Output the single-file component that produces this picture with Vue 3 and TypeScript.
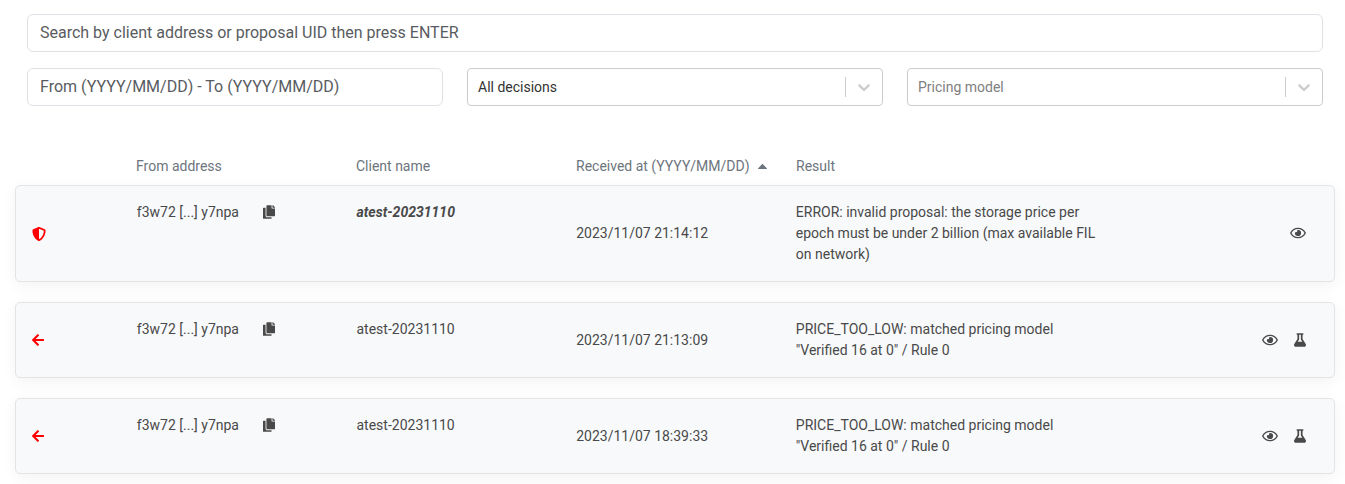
<script setup lang="ts">
import { ref } from 'vue'

interface Proposal {
  id: number
  status: 'error' | 'rejected'
  address: string
  client: string
  emphasised: boolean
  receivedAt: string
  result: string
  testable: boolean
}

const search = ref('')
const period = ref('')
const decision = ref('all')
const model = ref('')

const proposals: Proposal[] = [
  {
    id: 1,
    status: 'error',
    address: 'f3w72 [...] y7npa',
    client: 'atest-20231110',
    emphasised: true,
    receivedAt: '2023/11/07 21:14:12',
    result:
      'ERROR: invalid proposal: the storage price per epoch must be under 2 billion (max available FIL on network)',
    testable: false,
  },
  {
    id: 2,
    status: 'rejected',
    address: 'f3w72 [...] y7npa',
    client: 'atest-20231110',
    emphasised: false,
    receivedAt: '2023/11/07 21:13:09',
    result: 'PRICE_TOO_LOW: matched pricing model "Verified 16 at 0" / Rule 0',
    testable: true,
  },
  {
    id: 3,
    status: 'rejected',
    address: 'f3w72 [...] y7npa',
    client: 'atest-20231110',
    emphasised: false,
    receivedAt: '2023/11/07 18:39:33',
    result: 'PRICE_TOO_LOW: matched pricing model "Verified 16 at 0" / Rule 0',
    testable: true,
  },
]
</script>

<template>
  <main class="page">
    <form class="filters" @submit.prevent>
      <input
        v-model="search"
        class="field search"
        type="text"
        aria-label="Search"
        placeholder="Search by client address or proposal UID then press ENTER"
      />
      <input
        v-model="period"
        class="field"
        type="text"
        aria-label="Period"
        placeholder="From (YYYY/MM/DD) - To (YYYY/MM/DD)"
      />
      <div class="picker">
        <select v-model="decision" aria-label="Decision">
          <option value="all">All decisions</option>
        </select>
        <span class="indicator">
          <svg viewBox="0 0 20 20" aria-hidden="true">
            <path
              d="M4.516 7.548c0.436-0.446 1.043-0.481 1.576 0l3.908 3.747 3.908-3.747c0.533-0.481 1.141-0.446 1.574 0 0.436 0.445 0.408 1.197 0 1.615-0.406 0.418-4.695 4.502-4.695 4.502-0.217 0.223-0.502 0.335-0.787 0.335s-0.57-0.112-0.789-0.335c0 0-4.287-4.084-4.695-4.502s-0.436-1.17 0-1.615z"
            />
          </svg>
        </span>
      </div>
      <div class="picker">
        <select v-model="model" class="empty" aria-label="Pricing model">
          <option value="">Pricing model</option>
        </select>
        <span class="indicator">
          <svg viewBox="0 0 20 20" aria-hidden="true">
            <path
              d="M4.516 7.548c0.436-0.446 1.043-0.481 1.576 0l3.908 3.747 3.908-3.747c0.533-0.481 1.141-0.446 1.574 0 0.436 0.445 0.408 1.197 0 1.615-0.406 0.418-4.695 4.502-4.695 4.502-0.217 0.223-0.502 0.335-0.787 0.335s-0.57-0.112-0.789-0.335c0 0-4.287-4.084-4.695-4.502s-0.436-1.17 0-1.615z"
            />
          </svg>
        </span>
      </div>
    </form>

    <table class="proposals">
      <thead>
        <tr class="line">
          <td></td>
          <th scope="col">From address</th>
          <th scope="col">Client name</th>
          <th scope="col" aria-sort="ascending">
            <button class="sort" type="button">
              Received at (YYYY/MM/DD)
              <svg class="caret" viewBox="0 0 9 5" aria-hidden="true">
                <path d="M0.3 5h8.4c.4 0 .4-.4.1-.7L5.2.4c-.4-.5-1-.5-1.4 0L.2 4.3c-.3.3-.3.7.1.7z" />
              </svg>
            </button>
          </th>
          <th scope="col">Result</th>
          <td></td>
        </tr>
      </thead>
      <tbody>
        <tr v-for="p in proposals" :key="p.id" class="line card">
          <td class="status">
            <svg v-if="p.status === 'error'" class="icon square" viewBox="0 0 512 512" role="img" aria-label="Error">
              <path
                d="M466.5 83.7l-192-80a48.15 48.15 0 0 0-36.9 0l-192 80C27.7 91.1 16 108.6 16 128c0 198.5 114.5 335.7 221.5 380.3 11.8 4.9 25.1 4.9 36.9 0C360.1 472.6 496 349.3 496 128c0-19.4-11.7-36.9-29.5-44.3zM256.1 446.3l-.1-381 175.9 73.3c-3.3 151.4-82.1 261.1-175.8 307.7z"
              />
            </svg>
            <svg v-else class="icon" viewBox="0 0 448 512" role="img" aria-label="Rejected">
              <path
                d="M257.5 445.1l-22.2 22.2c-9.4 9.4-24.6 9.4-33.9 0L7 273c-9.4-9.4-9.4-24.6 0-33.9L201.4 44.7c9.4-9.4 24.6-9.4 33.9 0l22.2 22.2c9.5 9.5 9.3 25-.4 34.3L136.6 216H424c13.3 0 24 10.7 24 24v32c0 13.3-10.7 24-24 24H136.6l120.5 114.8c9.8 9.3 10 24.8.4 34.3z"
              />
            </svg>
          </td>
          <td class="address">
            <span>{{ p.address }}</span>
            <button class="tool" type="button" aria-label="Copy address">
              <svg class="icon" viewBox="0 0 448 512" aria-hidden="true">
                <path
                  d="M320 448v40c0 13.255-10.745 24-24 24H24c-13.255 0-24-10.745-24-24V120c0-13.255 10.745-24 24-24h72v296c0 30.879 25.121 56 56 56h168zm0-344V0H152c-13.255 0-24 10.745-24 24v368c0 13.255 10.745 24 24 24h272c13.255 0 24-10.745 24-24V128H344c-13.2 0-24-10.8-24-24zm120.971-31.029L375.029 7.029A24 24 0 0 0 358.059 0H352v96h96v-6.059a24 24 0 0 0-7.029-16.97z"
                />
              </svg>
            </button>
          </td>
          <td :class="{ emphasised: p.emphasised }">{{ p.client }}</td>
          <td class="middle">{{ p.receivedAt }}</td>
          <td>{{ p.result }}</td>
          <td class="actions">
            <button class="tool" type="button" aria-label="View proposal">
              <svg class="icon wide" viewBox="0 0 576 512" aria-hidden="true">
                <path
                  d="M288 144a110.94 110.94 0 0 0-31.24 5 55.4 55.4 0 0 1 7.24 27 56 56 0 0 1-56 56 55.4 55.4 0 0 1-27-7.24A111.71 111.71 0 1 0 288 144zm284.52 97.4C518.29 135.59 410.93 64 288 64S57.68 135.64 3.48 241.41a32.35 32.35 0 0 0 0 29.19C57.71 376.41 165.07 448 288 448s230.32-71.64 284.52-177.41a32.35 32.35 0 0 0 0-29.19zM288 400c-98.65 0-189.09-55-237.93-144C98.91 167 189.34 112 288 112s189.09 55 237.93 144C477.1 345 386.66 400 288 400z"
                />
              </svg>
            </button>
            <button v-if="p.testable" class="tool" type="button" aria-label="Test proposal">
              <svg class="icon" viewBox="0 0 448 512" aria-hidden="true">
                <path
                  d="M437.2 403.5L320 215V64h8c13.3 0 24-10.7 24-24V24c0-13.3-10.7-24-24-24H120c-13.3 0-24 10.7-24 24v16c0 13.3 10.7 24 24 24h8v151L10.8 403.5C-18.5 450.6 15.3 512 70.9 512h306.2c55.7 0 89.4-61.5 60.1-108.5zM137.9 320l48.2-77.6c3.7-5.2 5.8-11.6 5.8-18.4V64h64v160c0 6.9 2.2 13.2 5.8 18.4l48.2 77.6h-172z"
                />
              </svg>
            </button>
          </td>
        </tr>
      </tbody>
    </table>
  </main>
</template>

<style>
body {
  background: #fff;
}
</style>

<style scoped>
.page {
  padding: 14px 10px 10px 15px;
  font-family: Roboto, 'Liberation Sans', sans-serif;
  font-size: 14px;
  line-height: 21px;
  color: #494949;
}

.page * {
  box-sizing: border-box;
}

.filters {
  display: grid;
  grid-template-columns: repeat(3, 1fr);
  gap: 16px 24px;
  padding: 0 12px;
}

.field {
  min-width: 0;
  height: 38px;
  padding: 0 12px 2px;
  border: 1px solid #dee2e6;
  border-radius: 6px;
  background: #fff;
  font: inherit;
  font-size: 16px;
  color: #494949;
}

.field::placeholder {
  color: #595c5f;
  opacity: 1;
}

.search {
  grid-column: 1 / -1;
}

.picker {
  display: grid;
  grid-template-columns: 1fr auto;
  align-items: center;
  height: 38px;
  border: 1px solid #ccc;
  border-radius: 4px;
}

.picker select {
  grid-area: 1 / 1 / 2 / 3;
  width: 100%;
  height: 36px;
  padding: 0 10px;
  border: 0;
  appearance: none;
  background: transparent;
  font: inherit;
  color: #333;
}

.picker select.empty {
  color: #808080;
}

.indicator {
  grid-area: 1 / 2;
  display: flex;
  padding: 0 8px;
  border-left: 1px solid #ccc;
  pointer-events: none;
}

.indicator svg {
  width: 20px;
  height: 20px;
  fill: #ccc;
}

.proposals {
  display: block;
  margin-top: 50px;
}

.proposals thead {
  display: block;
}

.proposals tbody {
  display: grid;
  gap: 20px;
  margin-top: 8px;
}

.line {
  display: grid;
  grid-template-columns: 1fr 2fr 2fr 2fr 3fr 2fr;
}

.line th,
.line td {
  padding: 0 11px;
  text-align: left;
}

.line th {
  font-weight: 400;
  color: #6c757d;
}

.card {
  padding: 16px 0;
  border: 1px solid #e2e4e6;
  border-radius: 5px;
  background: #f8f9fb;
  box-shadow: 0 4px 16px rgba(0, 0, 0, 0.05);
}

button {
  display: flex;
  align-items: center;
  padding: 0;
  border: 0;
  background: none;
  font: inherit;
  color: inherit;
  cursor: pointer;
}

.tool {
  padding-bottom: 1px;
}

.sort {
  gap: 8px;
  white-space: nowrap;
}

.caret {
  width: 9px;
  height: 5px;
  fill: currentColor;
}

.icon {
  display: block;
  width: 12px;
  height: 14px;
  fill: currentColor;
}

.icon.square {
  width: 14px;
}

.icon.wide {
  width: 16px;
}

.line .status {
  align-self: center;
  padding-left: 16px;
  color: #f00;
}

.address {
  display: flex;
  align-items: center;
  align-self: start;
  gap: 24px;
}

.emphasised {
  font-style: italic;
  font-weight: 700;
}

.middle {
  align-self: center;
}

.line .actions {
  display: flex;
  align-items: center;
  justify-content: flex-end;
  gap: 16px;
  padding-right: 28px;
}
</style>
